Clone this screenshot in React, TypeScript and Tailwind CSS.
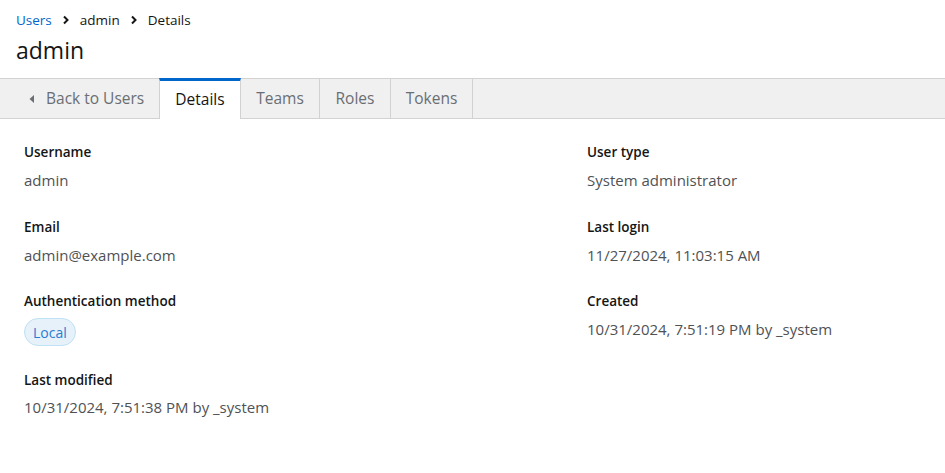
const font = { fontFamily: '"Open Sans", "Noto Sans", sans-serif' };

const tabs = [
    { name: "Details", w: "w-[82px]" },
    { name: "Teams", w: "w-[79px]" },
    { name: "Roles", w: "w-[71px]" },
    { name: "Tokens", w: "w-[82px]" },
];

const Label = ({ children }: { children: React.ReactNode }) => (
    <div className="text-[13.5px] font-semibold text-[#151515] leading-[20px]">{children}</div>
);

const Field = ({ label, children, className = "" }: { label: string; children: React.ReactNode; className?: string }) => (
    <div className={"flex flex-col " + className}>
        <Label>{label}</Label>
        <div className="mt-[8px] text-[15px] text-[#4f5255] leading-[20px]">{children}</div>
    </div>
);

const Chevron = () => (
    <svg className="mx-[10px]" width="8" height="10" viewBox="0 0 8 10">
        <path d="M2 1.5 L5.5 5 L2 8.5" stroke="#151515" strokeWidth="2" fill="none" />
    </svg>
);

const App = () => {
    return (
        <div className="w-[945px] h-[473px] bg-white" style={font}>
            <div className="px-4 pt-[10px]">
                <nav className="flex items-center text-[13.5px] leading-[20px] text-[#151515]">
                    <span className="text-[#0066cc]">Users</span>
                    <Chevron />
                    <span>admin</span>
                    <Chevron />
                    <span>Details</span>
                </nav>
                <h1 className="mt-[4px] text-[23px] leading-[32px] text-[#151515]">admin</h1>
            </div>

            <div className="mt-[12px] flex h-[41px] bg-[#f0f0f0] border-y border-[#d2d2d2]">
                <div className="flex items-center w-[159px] pl-[28px] text-[15.5px] text-[#6a6e73]">
                    <svg width="8" height="10" viewBox="0 0 8 10" className="mr-[10px]">
                        <path d="M6 1 L1.5 5 L6 9 Z" fill="#6a6e73" />
                    </svg>
                    Back to Users
                </div>
                {tabs.map((t, i) => (
                    <div
                        key={t.name}
                        className={
                            i === 0
                                ? "flex items-center justify-center w-[82px] -mt-px -mb-px bg-white border-t-[3px] border-[#0066cc] border-x border-x-[#d2d2d2] text-[15.5px] text-[#151515]"
                                : "flex items-center justify-center " + t.w + " border-r border-[#d2d2d2] text-[15.5px] text-[#6a6e73]"
                        }
                    >
                        {t.name}
                    </div>
                ))}
            </div>

            <div className="grid grid-cols-[563px_1fr] px-6 pt-[23px] gap-y-[26px]">
                <Field label="Username">admin</Field>
                <Field label="User type">System administrator</Field>
                <Field label="Email" className="mt-px">admin@example.com</Field>
                <Field label="Last login" className="mt-px">11/27/2024, 11:03:15 AM</Field>
                <div className="flex flex-col">
                    <Label>Authentication method</Label>
                    <div className="mt-[7px]">
                        <span className="inline-flex items-center h-[28px] px-[8px] rounded-full bg-[#e7f1fa] border border-[#bee1f4] text-[14px] text-[#2b7cd3]">
                            Local
                        </span>
                    </div>
                </div>
                <Field label="Created">10/31/2024, 7:51:19 PM by _system</Field>
                <div className="flex flex-col -mt-[2px]">
                    <Label>Last modified</Label>
                    <div className="mt-[7px] text-[15px] text-[#4f5255] leading-[20px]">10/31/2024, 7:51:38 PM by _system</div>
                </div>
            </div>
        </div>
    );
};

export default App;
